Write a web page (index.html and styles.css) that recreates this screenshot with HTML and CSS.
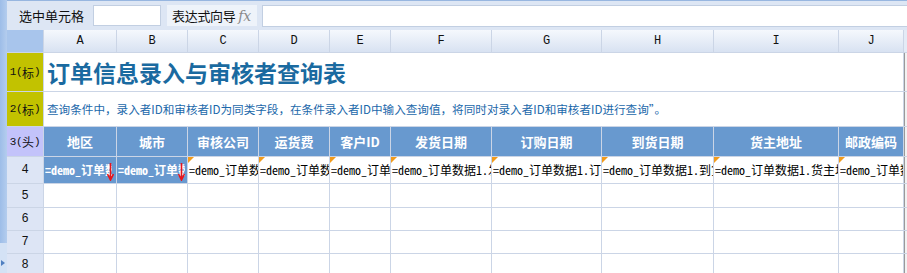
FILE: index.html
```html
<!DOCTYPE html>
<html lang="zh-CN">
<head>
  <meta charset="UTF-8" />
  <title>订单信息录入与审核者查询表</title>
  <link rel="stylesheet" href="styles.css">
</head>
<body>
<div class="page">

  <!-- left strip -->
  <div class="side-strip">
    <span class="side-arrow"></span>
  </div>

  <div class="main">
    <!-- toolbar -->
    <div class="toolbar">
      <span class="tb-label">选中单元格</span>
      <div class="tb-cell"></div>
      <div class="tb-wizard">表达式向导 <span class="fx">fx</span></div>
      <div class="tb-expr"><span class="caret">∨</span></div>
    </div>

    <!-- sheet -->
    <div class="sheet">
      <div class="corner"></div>
      <div class="col-head">A</div>
      <div class="col-head">B</div>
      <div class="col-head">C</div>
      <div class="col-head">D</div>
      <div class="col-head">E</div>
      <div class="col-head">F</div>
      <div class="col-head">G</div>
      <div class="col-head">H</div>
      <div class="col-head">I</div>
      <div class="col-head">J</div>
      <div class="col-head sb-head"></div>

      <div class="row-head title-mark">1(<span class="cjk">标</span>)</div>
      <div class="cell title-cell">订单信息录入与审核者查询表</div>
      <div class="sb"></div>

      <div class="row-head title-mark">2(<span class="cjk">标</span>)</div>
      <div class="cell note-cell">查询条件中，录入者ID和审核者ID为同类字段，在条件录入者ID中输入查询值，将同时对录入者ID和审核者ID进行查询”。</div>
      <div class="sb"></div>

      <div class="row-head head-mark">3(<span class="cjk">头</span>)</div>
      <div class="cell th">地区</div>
      <div class="cell th">城市</div>
      <div class="cell th">审核公司</div>
      <div class="cell th">运货费</div>
      <div class="cell th">客户ID</div>
      <div class="cell th">发货日期</div>
      <div class="cell th">订购日期</div>
      <div class="cell th">到货日期</div>
      <div class="cell th">货主地址</div>
      <div class="cell th">邮政编码</div>
      <div class="sb"></div>

      <div class="row-head">4</div>
      <div class="cell expand"><span class="clip">=demo_订单数据1.地区</span>
        <svg class="down" viewBox="0 0 7 18" width="7" height="18"><path d="M3.5 0 V16 M0.5 11 L3.5 17 L6.5 11" fill="none" stroke="#e8141a" stroke-width="1.6"/></svg>
      </div>
      <div class="cell expand"><span class="clip">=demo_订单数据1.城市</span>
        <svg class="down" viewBox="0 0 7 18" width="7" height="18"><path d="M3.5 0 V16 M0.5 11 L3.5 17 L6.5 11" fill="none" stroke="#e8141a" stroke-width="1.6"/></svg>
      </div>
      <div class="cell field">=demo_订单数据1.审核公司</div>
      <div class="cell field">=demo_订单数据1.运货费</div>
      <div class="cell field">=demo_订单数据1.客户ID</div>
      <div class="cell field">=demo_订单数据1.发货日期</div>
      <div class="cell field">=demo_订单数据1.订购日期</div>
      <div class="cell field">=demo_订单数据1.到货日期</div>
      <div class="cell field">=demo_订单数据1.货主地址</div>
      <div class="cell field">=demo_订单数据1.邮政编码</div>
      <div class="sb"></div>

      <div class="row-head">5</div>
      <div class="cell"></div><div class="cell"></div><div class="cell"></div><div class="cell"></div><div class="cell"></div>
      <div class="cell"></div><div class="cell"></div><div class="cell"></div><div class="cell"></div><div class="cell"></div>
      <div class="sb"></div>

      <div class="row-head">6</div>
      <div class="cell"></div><div class="cell"></div><div class="cell"></div><div class="cell"></div><div class="cell"></div>
      <div class="cell"></div><div class="cell"></div><div class="cell"></div><div class="cell"></div><div class="cell"></div>
      <div class="sb"></div>

      <div class="row-head">7</div>
      <div class="cell"></div><div class="cell"></div><div class="cell"></div><div class="cell"></div><div class="cell"></div>
      <div class="cell"></div><div class="cell"></div><div class="cell"></div><div class="cell"></div><div class="cell"></div>
      <div class="sb"></div>

      <div class="row-head">8</div>
      <div class="cell"></div><div class="cell"></div><div class="cell"></div><div class="cell"></div><div class="cell"></div>
      <div class="cell"></div><div class="cell"></div><div class="cell"></div><div class="cell"></div><div class="cell"></div>
      <div class="sb"></div>
    </div>
  </div>

</div>
</body>
</html>
```

FILE: styles.css
```css
body {
  margin: 0;
  font-family: 'Noto Sans CJK SC', sans-serif;
  background-color: #ffffff;
}

.page {
  display: flex;
  width: 907px;
  height: 273px;
  overflow: hidden;
}

/* Left strip */
.side-strip {
  width: 7px;
  flex-shrink: 0;
  background: linear-gradient(to right, #9dbde8, #b4cdee);
  display: flex;
  flex-direction: column;
  justify-content: flex-end;
}

.side-arrow {
  height: 30px;
  background-color: #d4e2f5;
  position: relative;
}

.side-arrow::after {
  content: "";
  position: absolute;
  left: 1px;
  top: 17px;
  border-left: 4px solid #4f7fc0;
  border-top: 3px solid transparent;
  border-bottom: 3px solid transparent;
}

.main {
  width: 900px;
  flex-shrink: 0;
}

/* Toolbar */
.toolbar {
  height: 29px;
  border-top: 1px solid #97b6e0;
  background-color: #dde6f4;
  display: flex;
  align-items: center;
  padding-left: 12px;
  overflow: hidden;
  font-size: 13px;
  color: #111;
  white-space: nowrap;
}

.toolbar > * {
  flex-shrink: 0;
}

.tb-label {
  width: 74px;
}

.tb-cell {
  width: 66px;
  height: 19px;
  background: white;
  border: 1px solid #c2cfe2;
}

.tb-wizard {
  margin-left: 6px;
  width: 85px;
  height: 21px;
  padding-left: 5px;
  background-color: #eef3fa;
  line-height: 21px;
  letter-spacing: -0.3px;
}

.fx {
  font-family: 'DejaVu Serif', serif;
  font-style: italic;
  font-size: 14px;
  color: #8a8a8a;
  letter-spacing: 0;
}

.tb-expr {
  margin-left: 5px;
  width: 660px;
  height: 20px;
  background: white;
  border: 1px solid #c2cfe2;
  text-align: right;
  line-height: 20px;
}

.caret {
  font-size: 14px;
  color: #555;
  margin-right: 3px;
}

/* Sheet grid */
.sheet {
  display: grid;
  grid-template-columns: 36px 72px 70px 70px 70px 60px 100px 109px 111px 124px 64px 3px;
  grid-template-rows: 22px 38px 34px 29px 26px 23px 22px 22px 22px;
  gap: 1px;
  background-color: #cbd5e6;
}

.corner {
  background-color: #a8c5ec;
}

.col-head {
  background: linear-gradient(#f5f8fd, #d8e2f2);
  font-family: 'Liberation Mono', monospace;
  font-size: 12px;
  text-align: center;
  line-height: 22px;
  color: #111;
}

.sb-head {
  background: #e4ebf6;
}

.sb {
  background-color: #f2f2f2;
  border-left: 1px solid #9a9a9a;
}

.row-head {
  background-color: #dde5f5;
  font-family: 'Liberation Mono', 'Noto Sans CJK SC', monospace;
  font-size: 12px;
  color: #111;
  display: flex;
  align-items: center;
  justify-content: center;
  white-space: nowrap;
}

.row-head.title-mark,
.row-head.head-mark {
  font-size: 11px;
  letter-spacing: -0.5px;
}

.row-head .cjk {
  font-family: 'Noto Sans CJK SC', sans-serif;
  font-size: 12px;
  letter-spacing: 0;
}

.row-head.title-mark {
  background-color: #c2c200;
}

.row-head.head-mark {
  background-color: #c3c3fa;
}

.cell {
  background-color: white;
  overflow: hidden;
  white-space: nowrap;
  position: relative;
}

.title-cell {
  grid-column: 2 / 12;
  font-size: 23px;
  font-weight: bold;
  color: #1a6aa0;
  padding-left: 3px;
  line-height: 38px;
}

.note-cell {
  grid-column: 2 / 12;
  font-size: 11.6px;
  color: #1b68aa;
  padding-left: 3px;
  line-height: 34px;
}

.th {
  background-color: #6899cf;
  color: white;
  font-weight: bold;
  font-size: 13px;
  text-align: center;
  line-height: 29px;
}

.field,
.expand {
  font-family: 'Noto Sans Mono CJK SC', 'Liberation Mono', 'Noto Sans CJK SC', monospace;
  font-size: 12px;
  line-height: 26px;
  padding-left: 1px;
  color: #000;
}

.field::before {
  content: "";
  position: absolute;
  left: 0;
  top: 0;
  border-top: 6px solid #f29b1c;
  border-right: 6px solid transparent;
}

.expand {
  background-color: #6899cf;
  color: white;
  font-weight: bold;
}

.clip {
  display: block;
  width: 67px;
  overflow: hidden;
}

.down {
  position: absolute;
  right: 2px;
  top: 6px;
}
```
